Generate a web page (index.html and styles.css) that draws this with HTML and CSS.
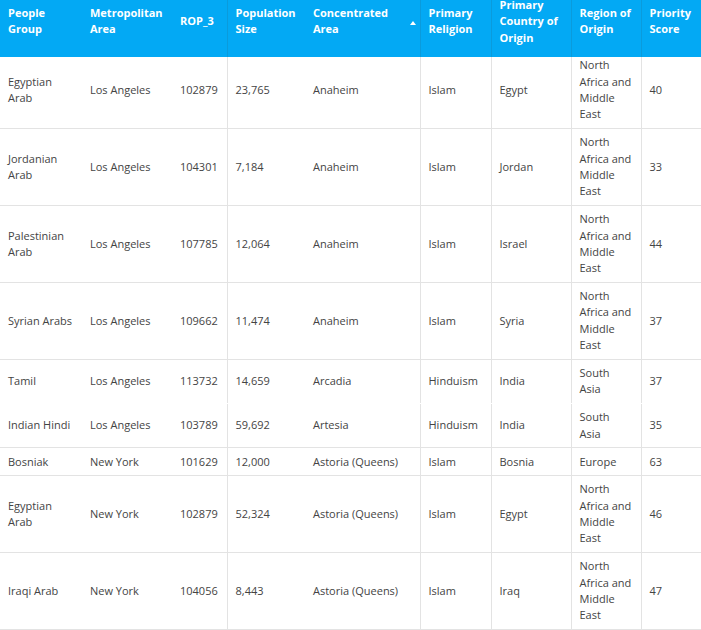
FILE: index.html
```html
<!DOCTYPE html>
<html lang="en">
<head>
<meta charset="utf-8">
<title>People Groups</title>
<link rel="stylesheet" href="styles.css">
</head>
<body>
<div class="wrap">
<table class="grid">
  <colgroup>
    <col class="w-people">
    <col class="w-metro">
    <col class="w-rop">
    <col class="w-pop">
    <col class="w-area">
    <col class="w-rel">
    <col class="w-country">
    <col class="w-region">
    <col class="w-score">
  </colgroup>
  <thead>
    <tr>
      <th>People Group</th>
      <th>Metropolitan Area</th>
      <th>ROP_3</th>
      <th>Population Size</th>
      <th class="sorted">Concentrated Area<svg class="sort-icon" width="6" height="4" viewBox="0 0 6 4"><path d="M0 4 L3 0 L6 4 Z" fill="#fff"/></svg></th>
      <th>Primary Religion</th>
      <th>Primary Country of Origin</th>
      <th>Region of Origin</th>
      <th>Priority Score</th>
    </tr>
  </thead>
  <tbody>
    <tr class="first">
      <td>Egyptian Arab</td><td>Los Angeles</td><td>102879</td><td>23,765</td><td>Anaheim</td><td>Islam</td><td>Egypt</td><td>North Africa and Middle East</td><td>40</td>
    </tr>
    <tr>
      <td>Jordanian Arab</td><td>Los Angeles</td><td>104301</td><td>7,184</td><td>Anaheim</td><td>Islam</td><td>Jordan</td><td>North Africa and Middle East</td><td>33</td>
    </tr>
    <tr>
      <td>Palestinian Arab</td><td>Los Angeles</td><td>107785</td><td>12,064</td><td>Anaheim</td><td>Islam</td><td>Israel</td><td>North Africa and Middle East</td><td>44</td>
    </tr>
    <tr>
      <td>Syrian Arabs</td><td>Los Angeles</td><td>109662</td><td>11,474</td><td>Anaheim</td><td>Islam</td><td>Syria</td><td>North Africa and Middle East</td><td>37</td>
    </tr>
    <tr class="no-line">
      <td>Tamil</td><td>Los Angeles</td><td>113732</td><td>14,659</td><td>Arcadia</td><td>Hinduism</td><td>India</td><td>South Asia</td><td>37</td>
    </tr>
    <tr>
      <td>Indian Hindi</td><td>Los Angeles</td><td>103789</td><td>59,692</td><td>Artesia</td><td>Hinduism</td><td>India</td><td>South Asia</td><td>35</td>
    </tr>
    <tr>
      <td>Bosniak</td><td>New York</td><td>101629</td><td>12,000</td><td>Astoria (Queens)</td><td>Islam</td><td>Bosnia</td><td>Europe</td><td>63</td>
    </tr>
    <tr>
      <td>Egyptian Arab</td><td>New York</td><td>102879</td><td>52,324</td><td>Astoria (Queens)</td><td>Islam</td><td>Egypt</td><td>North Africa and Middle East</td><td>46</td>
    </tr>
    <tr>
      <td>Iraqi Arab</td><td>New York</td><td>104056</td><td>8,443</td><td>Astoria (Queens)</td><td>Islam</td><td>Iraq</td><td>North Africa and Middle East</td><td>47</td>
    </tr>
    <tr class="spacer">
      <td></td><td></td><td></td><td></td><td></td><td></td><td></td><td></td><td></td>
    </tr>
  </tbody>
</table>
</div>
</body>
</html>
```

FILE: styles.css
```css
html, body {
  margin: 0;
  padding: 0;
  background: #ffffff;
}

body {
  font-family: "Open Sans", "Liberation Sans", sans-serif;
  font-size: 11px;
  color: #444444;
  overflow: hidden;
}

.wrap {
  width: 701px;
  height: 630px;
  overflow: hidden;
}

.grid {
  width: 701px;
  margin-top: -3px;
  border-collapse: collapse;
  table-layout: fixed;
}

.w-people { width: 82px; }
.w-metro { width: 90px; }
.w-rop { width: 55px; }
.w-pop { width: 78px; }
.w-area { width: 115px; }
.w-rel { width: 71px; }
.w-country { width: 80px; }
.w-region { width: 70px; }
.w-score { width: 60px; }

.grid th {
  background: #03a9f4;
  color: #ffffff;
  font-weight: 700;
  text-align: left;
  vertical-align: middle;
  line-height: 16.33px;
  padding: 0 8px 11px 8px;
}

.grid th.sorted {
  position: relative;
  padding-right: 24px;
}

.sort-icon {
  position: absolute;
  right: 4px;
  top: 24px;
}

.grid td {
  vertical-align: middle;
  line-height: 16.33px;
  padding: 5.3px 8px;
  border-bottom: 1px solid #e3e3e3;
}

.grid tr.first td {
  padding-top: 0.4px;
}

.grid tr.no-line td {
  border-bottom-color: transparent;
}

.grid tr.spacer td {
  height: 40px;
}

.grid th:nth-child(4),
.grid th:nth-child(6),
.grid th:nth-child(7),
.grid th:nth-child(8),
.grid th:nth-child(9) {
  border-left: 1px solid #0a9bdc;
}

.grid td:nth-child(4),
.grid td:nth-child(6),
.grid td:nth-child(7),
.grid td:nth-child(8),
.grid td:nth-child(9) {
  border-left: 1px solid #e3e3e3;
}
```
